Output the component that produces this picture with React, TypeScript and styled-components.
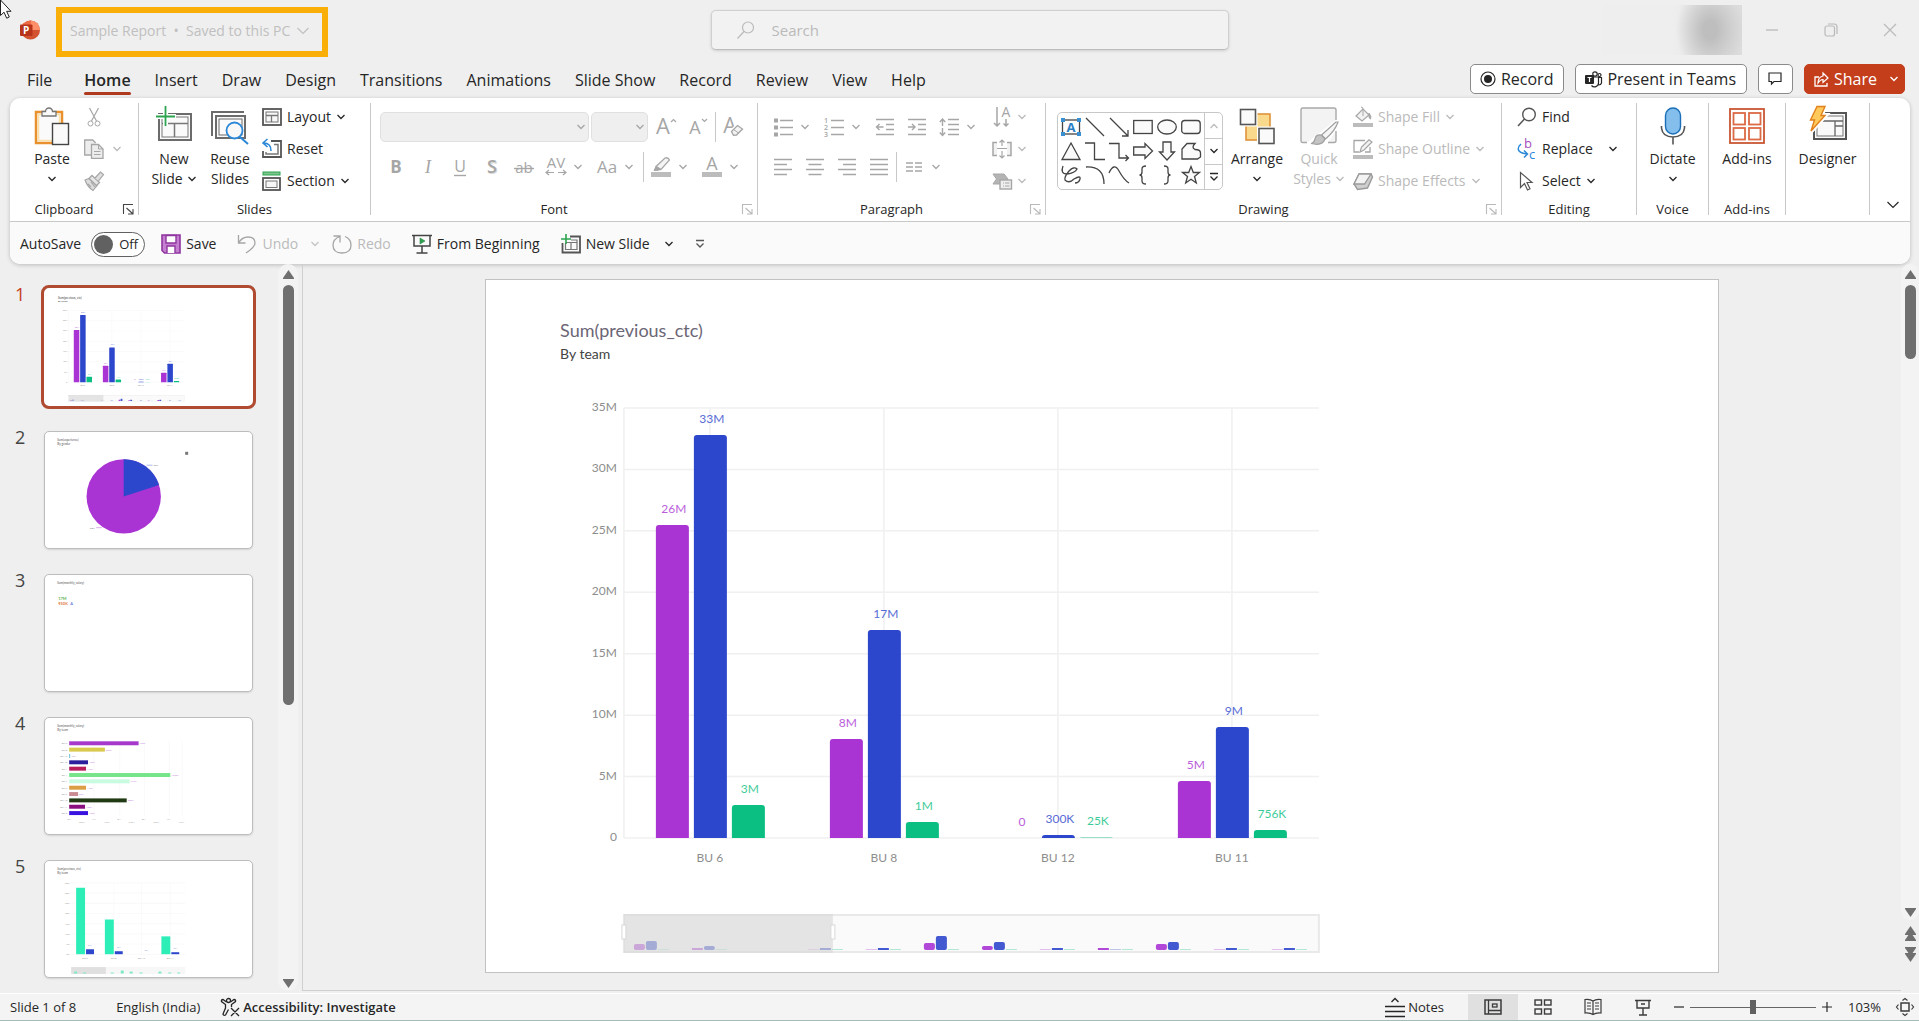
import React from "react";
import styled, { createGlobalStyle, css } from "styled-components";

const INK = "#262626";
const MUTED = "#bababa";
const SOFT = "#a6a6a6";
const EDGE = "#c8c8c8";
const ACCENT = "#c43e1c";
const PURPLE = "#aa34d3";
const BLUE = "#2d47cc";
const GREEN = "#0bbf82";

const Global = createGlobalStyle`
  * { box-sizing: border-box; }
  html, body, #root { height: 100%; }
  body {
    margin: 0;
    background: #efefef;
    color: ${INK};
    font-family: "Open Sans", "Noto Sans", sans-serif;
    font-size: 14px;
    line-height: 20px;
    overflow: hidden;
  }
  button, input, select { font: inherit; color: inherit; margin: 0; }
  button { background: none; border: 0; padding: 0; }
  h1, h2, p, ol { margin: 0; padding: 0; font-weight: 400; }
`;

const Svg = styled.svg`
  display: block;
  flex: none;
  fill: none;
  stroke: currentColor;
  overflow: visible;
`;

/* ---------- icons ---------- */

type IconProps = { s?: number; h?: number; box?: string; children: React.ReactNode };
const Icon = ({ s = 20, h = s, box = `0 0 ${s} ${h}`, children }: IconProps) => (
  <Svg width={s} height={h} viewBox={box} aria-hidden="true">{children}</Svg>
);

const Chevron = ({ up = false }: { up?: boolean }) => (
  <Icon s={10} h={8}><path d={up ? "M1.5 6 5 2.5 8.5 6" : "M1.5 2 5 5.5 8.5 2"} strokeWidth="1.3" /></Icon>
);

const WideChevron = () => (
  <Icon s={14} h={10}><path d="M1.5 2 7 7.5 12.5 2" strokeWidth="1.2" /></Icon>
);

const PowerPointLogo = () => (
  <Icon s={20} h={20}>
    <g stroke="none">
      <circle cx="10.5" cy="10" r="9.5" fill="#d35230" />
      <path d="M10.5 .5A9.5 9.5 0 0 1 20 10H10.5z" fill="#ff8f6b" />
      <path d="M10.5 .5A9.5 9.5 0 0 0 1 10h9.5z" fill="#ed6c47" />
      <rect x="0" y="4.5" width="12.5" height="11.5" rx="1" fill="#b7341a" />
      <text x="3" y="14" fontSize="10" fontWeight="700" fill="#fff" fontFamily="Open Sans, sans-serif">P</text>
    </g>
  </Icon>
);

const PasteIcon = () => (
  <Icon s={36} h={40}>
    <rect x="2" y="7" width="26" height="31" fill="#fafafa" stroke="#e8912d" strokeWidth="2.5" />
    <rect x="4.5" y="9.5" width="21" height="26" stroke="#fbe0a8" strokeWidth="1.5" />
    <path d="M8 11V6.5h3.5a3.5 3.5 0 0 1 7 0H22V11z" fill="#fafafa" stroke="#767676" strokeWidth="1.3" />
    <rect x="18.5" y="18.5" width="16" height="21" fill="#fafafa" stroke="#444" strokeWidth="1.4" />
  </Icon>
);
const CutIcon = () => (
  <Icon><path d="M5.5 1 12.5 14M14.5 1 7.5 14" strokeWidth="1.2" /><circle cx="6.5" cy="16.5" r="2.5" /><circle cx="13.5" cy="16.5" r="2.5" /></Icon>
);
const CopyIcon = () => (
  <Icon><path d="M7 16H.7V1h8l3 3" fill="#ededed" strokeWidth="1.3" /><path d="M7.5 5.5h7L19 10v9.3H7.5z" fill="#ededed" strokeWidth="1.3" /><path d="M14.5 5.5V10H19M10 12.5h6.5M10 15.5h6.5" /></Icon>
);
const BrushIcon = () => (
  <Icon><path d="m1 9 4-1.5 8 7L9 19.5Q3.500 16 1 9z" fill="#dcdcdc" strokeWidth="1.2" /><path d="m5 7.500 3-3 7.5 7-3 3z" fill="#e6e6e6" strokeWidth="1.3" /><path d="M11 7 16.5 1l3 2.500-5 6.500M4 13l3 3M7 11l4 5" fill="#dedede" strokeWidth="1.2" /></Icon>
);
const NewSlideIcon = () => (
  <Icon s={40} h={40}>
    <g stroke="#777"><rect x="5" y="9" width="32" height="26" fill="#fafafa" stroke="#6b6b6b" strokeWidth="2" /><rect x="8" y="12" width="26" height="20" strokeWidth="1" /><path d="M8 18.5h26M20.5 18.5V32" strokeWidth="1.5" /></g>
    <path d="M1 11.5h21M11.5 0v21" stroke="#fff" strokeWidth="5" /><path d="M2 11.5h19M11.5 1v20" stroke="#2da44e" strokeWidth="1.8" />
  </Icon>
);
const ReuseIcon = () => (
  <Icon s={40} h={40}>
    <g stroke="#6b6b6b"><path d="M2 31V7h32" strokeWidth="2" /><rect x="6" y="11" width="29" height="22" fill="#fafafa" strokeWidth="2" /><rect x="9" y="14" width="23" height="16" /></g>
    <circle cx="24.5" cy="25.5" r="8" fill="#f8f8f8" stroke="#2b88d8" strokeWidth="1.8" /><path d="m30 32 8 7" stroke="#2b88d8" strokeWidth="2" />
  </Icon>
);
const LayoutIcon = () => (
  <Icon><g stroke="#555"><rect x="1" y="2" width="18" height="16" strokeWidth="1.8" /><rect x="4" y="5" width="12" height="10" stroke="#777" fill="#f7f7f7" /><path d="M4 8.5h12M9.5 8.5V15" stroke="#777" strokeWidth="1.3" /></g></Icon>
);
const ResetIcon = () => (
  <Icon><g stroke="#555"><path d="M9 2h10v16H1v-6" strokeWidth="1.8" /><path d="M12 5.5h4V15H4v-2" stroke="#777" strokeWidth="1.5" /></g><path d="M5.5 0 1 4l4.5 4M1.5 4C6 4 9 6 9 12" stroke="#2b88d8" strokeWidth="1.6" /></Icon>
);
const SectionIcon = () => (
  <Icon><rect x="1" y="1" width="17" height="3" fill="#7cc68d" stroke="#2da44e" /><rect x="1" y="7" width="17" height="12" stroke="#555" strokeWidth="1.8" /><rect x="4" y="10" width="11" height="6.5" stroke="#777" fill="#f7f7f7" /></Icon>
);

const letter = (t: string, size = 20, extra: React.SVGProps<SVGTextElement> = {}) => (
  <text x="10" y="17" textAnchor="middle" fontSize={size} stroke="none" fill="currentColor" {...extra}>{t}</text>
);
const GrowIcon = () => <Icon s={22}>{letter("A", 22, { x: 8, y: 18 })}<path d="m16 6 2.5-2.5L21 6" strokeWidth="1.2" /></Icon>;
const ShrinkIcon = () => <Icon s={22}>{letter("A", 18, { x: 8, y: 18 })}<path d="m15 3 2.5 2.5L20 3" strokeWidth="1.2" /></Icon>;
const ClearIcon = () => (
  <Icon s={22}>{letter("A", 21, { x: 8, y: 17 })}<path d="m9.500 15.500 6-6 5 3.500-6 6-3 .2z" fill="#fff" stroke="#fff" strokeWidth="4" /><path d="m9.500 15.500 6-6 5 3.500-6 6-3 .2z" fill="#f4f4f4" strokeWidth="1.3" /><path d="m11.500 13.500 5 3.500" /></Icon>
);
const BoldIcon = () => <Icon>{letter("B", 17, { fontWeight: 700, y: 16 })}</Icon>;
const ItalicIcon = () => <Icon>{letter("I", 18, { fontFamily: "Liberation Serif, serif", fontStyle: "italic", y: 16 })}</Icon>;
const UnderlineIcon = () => <Icon>{letter("U", 16, { y: 15 })}<path d="M4 18.5h12" strokeWidth="1.4" /></Icon>;
const ShadowIcon = () => <Icon>{letter("S", 18, { x: 11, y: 17, fontWeight: 700, opacity: 0.4 })}{letter("S", 18, { y: 16, fontWeight: 600 })}</Icon>;
const StrikeIcon = () => <Icon>{letter("ab", 15, { y: 16 })}<path d="M0 11.5h20" strokeWidth="1.4" /></Icon>;
const SpacingIcon = () => <Icon s={22}>{letter("AV", 15, { x: 11, y: 12 })}<path d="M1 16.5h8M13 16.5h8M4 14l-3 2.5L4 19M18 14l3 2.5-3 2.5" strokeWidth="1.2" /></Icon>;
const CaseIcon = () => <Icon s={22}>{letter("Aa", 17, { x: 11, y: 17 })}</Icon>;
const HighlightIcon = () => (
  <Icon><path d="M0 17.5h20" stroke="#bcbcbc" strokeWidth="5" /><path d="M5 9.5 14 1q3-1 4.5 2L10 12.5z" fill="#f4f4f4" strokeWidth="1.3" /><path d="m5 9.5-2 4 4-.2 3-.8z" fill="currentColor" /></Icon>
);
const FontColorIcon = () => <Icon>{letter("A", 18, { y: 13 })}<path d="M0 17.5h20" stroke="#bcbcbc" strokeWidth="5" /></Icon>;

const BulletsIcon = () => <Icon><path d="M7 3.5h13M7 10.5h13M7 17.5h13" strokeWidth="1.4" /><path d="M1 3.5h4M1 10.5h4M1 17.5h4" strokeWidth="4" /></Icon>;
const NumbersIcon = () => (
  <Icon><path d="M7 3.5h13M7 10.5h13M7 17.5h13" strokeWidth="1.4" />{["1", "2", "3"].map((n, i) => <text key={n} x="0" y={6 + i * 7} fontSize="7" fontWeight="600" stroke="none" fill="currentColor">{n}</text>)}</Icon>
);
const OutdentIcon = () => <Icon><path d="M1 2.5h18M11 7.5h8M11 12.5h8M1 17.5h18M1.5 10h7M4.5 7l-3 3 3 3" strokeWidth="1.4" /></Icon>;
const IndentIcon = () => <Icon><path d="M1 2.5h18M11 7.5h8M11 12.5h8M1 17.5h18M1 10h7M5 7l3 3-3 3" strokeWidth="1.4" /></Icon>;
const LineSpacingIcon = () => <Icon><path d="M9 2.5h11M9 7.5h11M9 12.5h11M9 17.5h11M3.5 2.5V9M3.5 11v7M.8 5l2.7-3 2.7 3M.8 15.5l2.7 3 2.7-3" strokeWidth="1.4" /></Icon>;
const AlignLeftIcon = () => <Icon><path d="M1 2.5h18M1 7.5h13M1 12.5h18M1 17.5h13" strokeWidth="1.5" /></Icon>;
const AlignCenterIcon = () => <Icon><path d="M1 2.5h18M3.5 7.5h13M1 12.5h18M3.5 17.5h13" strokeWidth="1.5" /></Icon>;
const AlignRightIcon = () => <Icon><path d="M1 2.5h18M6 7.5h13M1 12.5h18M6 17.5h13" strokeWidth="1.5" /></Icon>;
const JustifyIcon = () => <Icon><path d="M1 2.5h18M1 7.5h18M1 12.5h18M1 17.5h18" strokeWidth="1.5" /></Icon>;
const ColumnsIcon = () => <Icon><path d="M2 6h7M2 10h7M2 14h7M11 6h7M11 10h7M11 14h7" strokeWidth="1.3" /></Icon>;
const TextDirIcon = () => <Icon>{letter("A", 14, { x: 14, y: 10 })}<path d="M5 0v19M2 16l3 3 3-3M14 12v7M11.5 16.5 14 19l2.5-2.5" strokeWidth="1.5" /></Icon>;
const AlignTextIcon = () => <Icon><path d="M5 3.5H1v13h4M15 3.5h4v13h-4" fill="#f2f2f2" strokeWidth="1.5" /><path d="M5 9.5h10M10 1v6M10 12v7M7.5 3.5 10 1l2.5 2.5M7.5 16.5 10 19l2.5-2.5" strokeWidth="1.2" /></Icon>;
const SmartArtIcon = () => <Icon><path d="M1 3h11l4 5-3 5H1l3.5-5z" fill="#b4b4b4" /><rect x="8" y="9" width="11.5" height="9" fill="#efefef" strokeWidth="1.4" /><path d="M11 12h1M13 12h4.5M11 15h1M13 15h4.5" /></Icon>;

const ArrangeIcon = () => (
  <Icon s={36} h={40}>
    <rect x="7" y="9" width="24" height="26" fill="#f9d98c" stroke="#e0933a" strokeWidth="1.6" />
    <g fill="#fff" stroke="#fff" strokeWidth="4"><rect x="1.5" y="4.5" width="15" height="15" /><rect x="20" y="23.5" width="15" height="15" /></g>
    <rect x="1.5" y="4.5" width="15" height="15" fill="#fafafa" stroke="#555" strokeWidth="1.6" />
    <rect x="20" y="23.5" width="15" height="15" fill="#fafafa" stroke="#555" strokeWidth="1.6" />
  </Icon>
);
const QuickStylesIcon = () => (
  <Icon s={40} h={40}>
    <path d="M8 37.5H4q-2 0-2-2V5q0-2 2-2h31q2 0 2 2v10M37 26v9.5q0 2-2 2h-6" fill="#f3f3f3" stroke="#a9a9a9" strokeWidth="1.4" />
    <path d="M37 17 22.5 30l4 4Q36 26 39 17z" fill="#f6f6f6" stroke="#a0a0a0" strokeWidth="1.2" />
    <path d="M22 30q-5-1-6 4-1 4-4 4.5 12 3 14-5z" fill="#c4c4c4" stroke="#a0a0a0" strokeWidth="1.2" />
  </Icon>
);
const FillIcon = () => <Icon><path d="M0 18h20" stroke="#bcbcbc" strokeWidth="4" /><path d="m3 9 7-7 6 6-7 6z" fill="#f2f2f2" strokeWidth="1.2" /><path d="M10 9V2q0-2-2-2" /><path d="M16 6q3 4 1.5 6-2-.5-1.5-6z" fill="currentColor" /></Icon>;
const OutlineIcon = () => <Icon><path d="M0 18h20" stroke="#bcbcbc" strokeWidth="4" /><path d="M12 1.5H1V13h5M17 8v5h-5" strokeWidth="1.3" /><path d="m7 13 1.5-5L16 .8 19 3l-8 8z" fill="#f2f2f2" strokeWidth="1.2" /></Icon>;
const EffectsIcon = () => <Icon><path d="M1 13 6 3h12l1.5 3-5 11-10 1.5z" fill="#cfcfcf" stroke="#9a9a9a" strokeWidth="1.4" /><path d="M6 3 1 13h10.5L18 3z" fill="#f3f3f3" stroke="#9a9a9a" strokeWidth="1.3" /></Icon>;

const FindIcon = () => <Icon><circle cx="12" cy="7.5" r="6.3" strokeWidth="1.4" /><path d="M7.5 12 1 19" strokeWidth="1.5" /></Icon>;
const ReplaceIcon = () => (
  <Icon s={20} h={22}>
    <text x="7" y="10" fontSize="13" stroke="none" fill="#a64ebd">b</text><text x="12" y="21" fontSize="13" stroke="none" fill="#2b88d8">c</text>
    <path d="M4 6Q.5 9 1.5 12t8.5 4M7 12.5l3.5 3.5L7 19.5" stroke="#2b88d8" strokeWidth="1.5" />
  </Icon>
);
const SelectIcon = () => <Icon><path d="M3.5 1.5v15l4-4 3 6.5 2.5-1.2-3-6.3H15z" strokeWidth="1.2" fill="#fff" /></Icon>;
const DictateIcon = () => (
  <Icon s={36} h={40}><rect x="10.5" y="3" width="15" height="26" rx="7.5" fill="#83beec" stroke="#1a6fb8" strokeWidth="1.4" /><path d="M6.5 21v2q1 9 11.5 9t11.5-9v-2M18 32v7.5" stroke="#555" strokeWidth="1.6" /></Icon>
);
const AddinsIcon = () => (
  <Icon s={36} h={40}><g stroke="#dc6a45" strokeWidth="1.8"><rect x="1" y="4" width="34" height="34" stroke="#c95733" /><rect x="4.5" y="8" width="11.5" height="11.5" /><rect x="20" y="8" width="11.5" height="11.5" /><rect x="4.5" y="23" width="11.5" height="11.5" /><rect x="20" y="23" width="11.5" height="11.5" /></g></Icon>
);
const DesignerIcon = () => (
  <Icon s={40} h={40}>
    <rect x="6" y="8" width="32" height="26" fill="#fafafa" stroke="#555" strokeWidth="2" /><rect x="9" y="11" width="26" height="20" stroke="#777" /><path d="M9 16h26M27 16v15M27 21h8" stroke="#666" strokeWidth="1.3" />
    <path d="M9 1.5h8l-4 9h4L3 26l3.5-11H2.5z" fill="#fff" stroke="#fff" strokeWidth="5" /><path d="M9 1.5h8l-4 9h4L3 26l3.5-11H2.5z" fill="#ffc95c" stroke="#e0811c" strokeWidth="1.4" />
  </Icon>
);

const SaveIcon = () => (
  <Icon><path d="M1 1h18v18H3.5L1 16.5z" fill="#c57fd0" stroke="#9036a0" strokeWidth="1.6" /><path d="M5 1.5h10V9H5zM6 19v-7h8v7" fill="#fff" stroke="#9036a0" strokeWidth="1.4" /></Icon>
);
const UndoIcon = () => <Icon><path d="M1.5 1v8h7M1.5 9Q5 3 11 3q7 0 7 6 0 4-9 10" strokeWidth="1.3" /></Icon>;
const RedoIcon = () => <Icon><path d="M1.5 2H8v6.5M8 2.5Q1 5 1 11q0 8 9 8t9-8q0-6-6-8.500" strokeWidth="1.3" /></Icon>;
const PresentIcon = () => <Icon><path d="M0 1.5h20M2 1.5V12h16V1.5M10 12v7M4.5 19h11" stroke="#444" strokeWidth="1.5" /><path d="m8 4 5 3-5 3z" fill="#2da44e" stroke="#2b8047" strokeWidth=".6" /></Icon>;
const NewSlideSmallIcon = () => <Icon><g stroke="#555"><path d="M9 2.5h10v16H1.5V9" strokeWidth="1.8" /><path d="M10 6h6v9.5H4.5V9M5 8.5h11M10 8.5v7" stroke="#777" strokeWidth="1.2" /></g><path d="M0 5h10M5 0v10" stroke="#2da44e" strokeWidth="1.6" /></Icon>;
const OverflowIcon = () => <Icon s={10} h={10}><path d="M1 1.5h8M1.5 4.5 5 8l3.5-3.5" strokeWidth="1.3" /></Icon>;
const LauncherIcon = () => <Icon s={11}><path d="M.5 10V.5H10M3.5 4l6 5.5M10 5v5H5" strokeWidth="1.1" /></Icon>;

const RecordIcon = () => <Icon s={16}><circle cx="8" cy="8" r="7" strokeWidth="1.2" /><circle cx="8" cy="8" r="4" fill="currentColor" stroke="none" /></Icon>;
const TeamsIcon = () => (
  <Icon s={17} h={17}><g strokeWidth="1.2"><circle cx="10" cy="3" r="2.2" /><circle cx="14.5" cy="4" r="1.5" /><path d="M9 6h4.5v6a4 4 0 0 1-7 2.5M13.5 6.5h3V12q-.5 2-3 2" /></g><rect x="0" y="4" width="9" height="9" rx="1" fill={INK} stroke="none" /><path d="M2.5 6.5h4M4.5 6.5V11" stroke="#fff" strokeWidth="1.2" /></Icon>
);
const CommentIcon = () => <Icon s={14}><path d="M1 1h12v8.5H6L3.5 12V9.5H1z" strokeWidth="1.2" /></Icon>;
const ShareIcon = () => <Icon s={15}><path d="M5 5H1v9h12v-3" strokeWidth="1.3" /><path d="M9 1v3Q4 5 4 11q2-3.5 5-3.5v3L14 6z" strokeWidth="1.2" /></Icon>;

const AccessibilityIcon = () => (
  <Icon><g strokeWidth="1.3"><circle cx="8.5" cy="3.5" r="2" /><path d="M6.5 5 3 2.500q-2 0-1.500 2L5.500 7.500V11L3 17q.5 2 2.500 1L8.500 12.500M10.500 5 14 2.500q2 0 1.500 2l-4 3V10M11 11l8 8M19 11l-8 8" /></g></Icon>
);
const NotesIcon = () => <Icon><path d="M0 9.5h20M0 14.5h20M0 19.5h20" strokeWidth="1.4" /><path d="m6.5 5 3.5-3.5L13.5 5" strokeWidth="1.4" /></Icon>;
const NormalViewIcon = () => <Icon s={18} h={16}><rect x="1" y="1" width="16" height="14" strokeWidth="1.5" /><path d="M4.5 1v14M4.5 11.5H17" strokeWidth="1.3" /><rect x="8.5" y="5" width="4.5" height="3" strokeWidth="1.3" /></Icon>;
const SorterIcon = () => <Icon s={18} h={16}><g strokeWidth="1.4"><rect x="1" y="1" width="6.5" height="5" /><rect x="10.5" y="1" width="6.5" height="5" /><rect x="1" y="10" width="6.5" height="5" /><rect x="10.5" y="10" width="6.5" height="5" /></g></Icon>;
const ReadingIcon = () => <Icon s={18} h={18}><path d="M9 3Q6 .8 1 1.5V15q5-.5 8 1.5 3-2 8-1.5V1.5Q12 .8 9 3zv13.5M3 5h4M3 8h4M3 11h4M11 5h4M11 8h4M11 11h4" strokeWidth="1.2" /></Icon>;
const ShowIcon = () => <Icon s={16} h={17}><path d="M0 1.5h16M2 1.5V9h12V1.5M8 9v7M4 16h8M6 5h4" strokeWidth="1.4" /></Icon>;
const FitIcon = () => <Icon s={18} h={18}><rect x="5" y="5" width="8" height="8" strokeWidth="1.5" /><path d="m6.5 2.5 2.5-2 2.5 2M6.5 15.5l2.5 2 2.5-2M2.5 6.5.5 9l2 2.5M15.5 6.5l2 2.5-2 2.5" strokeWidth="1.2" /></Icon>;

/* ---------- title bar ---------- */

const Shell = styled.div`
  height: 100vh;
  display: flex;
  flex-direction: column;
`;

const Pointer = styled.div`
  position: absolute;
  top: 0;
  left: 0;
`;

const TitleBar = styled.header`
  height: 60px;
  flex: none;
  display: grid;
  grid-template-columns: 1fr minmax(240px, 518px) 1fr;
  align-items: center;
  padding-left: 20px;
  color: ${MUTED};
`;

const TitleLeft = styled.div`
  display: flex;
  align-items: center;
  gap: 16px;
`;

const FileName = styled.button`
  display: flex;
  align-items: center;
  gap: 6px;
  height: 50px;
  margin-top: 4px;
  padding: 0 12px 2px 8px;
  border: 6px solid #f9ae08;
  color: #c0c0c0;
  white-space: pre;
`;

const SearchBox = styled.label`
  height: 40px;
  display: flex;
  align-items: center;
  gap: 16px;
  padding: 0 24px;
  border: 1px solid #d0d0d0;
  border-bottom-color: #bdbdbd;
  border-radius: 5px;
  background: #f2f2f2;
  box-shadow: 0 1px 3px rgba(0, 0, 0, 0.14);

  input {
    flex: 1;
    border: 0;
    background: none;
    outline: 0;
    padding: 0;
    font-size: 15px;
  }
  input::placeholder { color: ${MUTED}; opacity: 1; }
`;

const WindowControls = styled.div`
  display: flex;
  justify-content: flex-end;
  align-items: center;
`;

const Account = styled.div`
  width: 140px;
  height: 50px;
  background:
    radial-gradient(ellipse 34px 46px at 108px 25px, #bebebe 20%, transparent 100%),
    linear-gradient(90deg, #eeeeee 50%, #dcdcdc);
`;

const WindowButton = styled.button`
  width: 59px;
  height: 40px;
  display: grid;
  place-items: center;
`;

/* ---------- tab row ---------- */

const TabRow = styled.div`
  height: 38px;
  flex: none;
  display: flex;
  justify-content: space-between;
  padding: 4px 14px 0 15px;
`;

const Tabs = styled.nav`
  display: flex;
`;

const Tab = styled.button<{ $on?: boolean; $file?: boolean }>`
  display: flex;
  flex-direction: column;
  justify-content: flex-start;
  padding: 5px 12px 0;
  margin-right: ${(p) => (p.$file ? 8 : 0)}px;
  font-size: 16px;
  line-height: 23px;
  font-weight: ${(p) => (p.$on ? 600 : 400)};

  ${(p) => p.$on && css`
    &::after {
      content: "";
      align-self: stretch;
      height: 3px;
      border-radius: 2px;
      background: #b03a1e;
    }
  `}
`;

const Actions = styled.div`
  display: flex;
  gap: 11px;
  height: 30px;
`;

const Action = styled.button<{ $primary?: boolean }>`
  display: flex;
  align-items: center;
  gap: 5px;
  padding: 0 ${(p) => (p.$primary ? 5 : 10)}px 0 9px;
  border: 1px solid ${(p) => (p.$primary ? ACCENT : "#8a8a8a")};
  border-radius: 5px;
  background: ${(p) => (p.$primary ? ACCENT : "#fff")};
  color: ${(p) => (p.$primary ? "#fff" : INK)};
  font-size: 16px;

  span { margin-right: ${(p) => (p.$primary ? 7 : 0)}px; }
`;

/* ---------- ribbon ---------- */

const RibbonCard = styled.section`
  flex: none;
  margin: 0 9px 0 10px;
  border-radius: 10px;
  background: #fff;
  box-shadow: 0 1px 4px rgba(0, 0, 0, 0.22);
`;

const RibbonRow = styled.div`
  display: flex;
  height: 123px;
  padding: 5px 0 6px;
`;

const GroupBox = styled.div<{ $w: number }>`
  flex: none;
  width: ${(p) => p.$w}px;
  display: flex;
  flex-direction: column;
  border-right: 1px solid ${EDGE};
`;

const GroupBody = styled.div<{ $pad: number; $gap: number; $center?: boolean }>`
  height: 100px;
  display: flex;
  align-items: flex-start;
  justify-content: ${(p) => (p.$center ? "center" : "flex-start")};
  gap: ${(p) => p.$gap}px;
  padding-left: ${(p) => p.$pad}px;
`;

const GroupFoot = styled.div`
  display: flex;
  height: 12px;
  font-size: 13px;
  line-height: 12px;

  p { flex: 1; text-align: center; }
`;

const Launcher = styled.button<{ $off?: boolean }>`
  width: 20px;
  display: grid;
  place-items: center;
  color: ${(p) => (p.$off ? MUTED : "#444")};
`;

type GroupProps = { w: number; pad?: number; gap?: number; label?: string; launcher?: "on" | "off"; children: React.ReactNode };
const Group = ({ w, pad = 0, gap = 8, label, launcher, children }: GroupProps) => (
  <GroupBox $w={w}>
    <GroupBody $pad={pad} $gap={gap} $center={!pad}>{children}</GroupBody>
    <GroupFoot>
      <p>{label}</p>
      {launcher && <Launcher $off={launcher === "off"} aria-label={`${label} settings`}><LauncherIcon /></Launcher>}
    </GroupFoot>
  </GroupBox>
);

const Big = styled.button<{ $w: number; $off?: boolean }>`
  width: ${(p) => p.$w}px;
  display: flex;
  flex-direction: column;
  align-items: center;
  padding-top: 2px;
  color: ${(p) => (p.$off ? MUTED : INK)};

  > svg:first-child { margin-bottom: 4px; }
  > svg:last-child { margin-top: 6px; }
`;

const Line = styled.span`
  display: flex;
  align-items: center;
  gap: 4px;
  white-space: nowrap;
`;

const Column = styled.div`
  display: flex;
  flex-direction: column;
  gap: 4px;
`;

const Small = styled.button<{ $off?: boolean; $split?: number }>`
  height: 28px;
  display: flex;
  align-items: center;
  gap: 5px;
  white-space: nowrap;
  color: ${(p) => (p.$off ? MUTED : INK)};

  > svg:first-child { color: ${(p) => (p.$off ? SOFT : "#555")}; }
  > svg:last-child:not(:first-child) { margin-left: ${(p) => p.$split ?? 0}px; }
`;

const ToolRows = styled.div`
  display: flex;
  flex-direction: column;
  gap: 10px;
  padding-top: 9px;
`;

const ToolRow = styled.div`
  height: 30px;
  display: flex;
  align-items: center;
  color: ${SOFT};
`;

const Tool = styled.button`
  width: 32px;
  height: 30px;
  display: grid;
  place-items: center;
`;

const Drop = styled.button`
  width: 12px;
  height: 30px;
  margin-right: 7px;
  display: grid;
  place-items: center;
`;

const Rule = styled.i`
  width: 1px;
  height: 30px;
  margin: 0 1px;
  background: ${EDGE};
`;

const Field = styled.label<{ $w: number }>`
  width: ${(p) => p.$w}px;
  height: 30px;
  margin-right: 2px;
  display: grid;
  align-items: center;
  border: 1px solid #e0e0e0;
  border-radius: 5px;
  background: #efefef;

  select {
    grid-area: 1 / 1;
    height: 100%;
    appearance: none;
    border: 0;
    background: none;
  }
  svg { grid-area: 1 / 1; justify-self: end; margin-right: 2px; }
`;

const Split = ({ name, icon }: { name: string; icon: React.ReactNode }) => (
  <>
    <Tool aria-label={name}>{icon}</Tool>
    <Drop aria-label={`${name} options`}><Chevron /></Drop>
  </>
);

const Gallery = styled.div`
  display: flex;
  margin-top: 9px;
  border: 1px solid ${EDGE};
  border-radius: 5px;
  background: #fff;
`;

const ShapeGrid = styled.div`
  display: grid;
  grid-template-columns: repeat(6, 24px);
  grid-auto-rows: 24px;
  padding: 2px 1px;
  color: #444;
`;

const ShapeButton = styled.button`
  display: grid;
  place-items: center;
`;

const GalleryScroll = styled.div`
  width: 18px;
  display: grid;
  grid-template-rows: repeat(3, 1fr);
  border-left: 1px solid ${EDGE};

  button { display: grid; place-items: center; }
  button + button { border-top: 1px solid ${EDGE}; }
  button:first-child { color: ${MUTED}; }
`;

const f = "#fafafa";
const shapes: [string, React.ReactNode][] = [
  ["Text box", <g key="s"><rect x="1.5" y="3" width="17" height="14" stroke="#444" />{letter("A", 13, { y: 15, fontWeight: 700, fill: "#2b7fc4" })}<path d="M0 3h4M16 3h4M0 17h4M16 17h4" stroke="#3a8fd0" strokeWidth="4" /></g>],
  ["Line", <path key="s" d="m1 1 18 18" />],
  ["Arrow", <path key="s" d="m1 1 18 18M19 13v6h-6" />],
  ["Rectangle", <rect key="s" x=".7" y="3.5" width="18.5" height="13" fill={f} />],
  ["Oval", <ellipse key="s" cx="10" cy="10" rx="9.3" ry="7" fill={f} />],
  ["Rounded rectangle", <rect key="s" x=".7" y="3.5" width="18.5" height="13" rx="3" fill={f} />],
  ["Triangle", <path key="s" d="M10 2 19 18.5H1z" fill={f} />],
  ["Elbow connector", <path key="s" d="M0 2h9.500v16.500H20" />],
  ["Elbow arrow", <path key="s" d="M0 2.5h10V17h9M16.5 14l3 3-3 3" />],
  ["Right arrow", <path key="s" d="M.7 6H12V2.5L19.5 10 12 17.5V14H.7z" fill={f} />],
  ["Down arrow", <path key="s" d="M6 1h8v10h3.5L10 19l-7.5-8H6z" fill={f} />],
  ["Freeform", <path key="s" d="M1 18V8l5-5.500h8q-4 4 0 6 5.500 0 5.500 3.500v4l-3 2z" fill={f} />],
  ["Scribble", <path key="s" d="M2 1q-3 8 4 8 8-1 10-5-3-3-8 2-5 6-4 9 4 4 9-1 7-4 6 0-1 4-5 4" />],
  ["Arc", <path key="s" d="M1 2q18-1 18 17" />],
  ["Curve", <path key="s" d="M0 8Q5-3 10 6t10 12" />],
  ["Left brace", <path key="s" d="M13 1q-4 0-4 3v3q0 3-2.5 3Q9 10 9 13v3q0 3 4 3" />],
  ["Right brace", <path key="s" d="M7 1q4 0 4 3v3q0 3 2.5 3Q11 10 11 13v3q0 3-4 3" />],
  ["Star", <path key="s" d="m10 1.5 2.3 6h6.2l-5 4 1.8 6.5-5.300-3.700L4.700 18l1.800-6.5-5-4h6.200z" fill={f} />],
];

const Collapse = styled.button`
  flex: 1;
  display: flex;
  justify-content: center;
  align-items: flex-end;
  padding: 0 0 5px 5px;
`;

/* ---------- quick access ---------- */

const QuickBar = styled.div`
  height: 43px;
  display: flex;
  align-items: center;
  gap: 21px;
  padding: 2px 10px 0;
  border-top: 1px solid ${EDGE};
  border-radius: 0 0 10px 10px;
  background: #fafafa;
`;

const QuickCluster = styled.div<{ $off?: boolean; $gap?: number }>`
  display: flex;
  align-items: center;
  gap: ${(p) => p.$gap ?? 12}px;
  color: ${(p) => (p.$off ? "#c4c4c4" : INK)};
`;

const Switch = styled.label`
  display: flex;
  align-items: center;
  gap: 10px;

  input { appearance: none; width: 19px; height: 19px; margin: 0; border-radius: 50%; background: #616161; }
`;

const SwitchTrack = styled.span`
  width: 54px;
  height: 25px;
  display: flex;
  align-items: center;
  gap: 6px;
  padding-left: 2px;
  border: 1px solid #616161;
  border-radius: 13px;
  background: #fff;
  font-size: 13px;
`;

/* ---------- workspace ---------- */

const Workspace = styled.main`
  flex: 1;
  min-height: 0;
  display: flex;
`;

const SlidePane = styled.aside`
  width: 303px;
  flex: none;
  display: flex;
  padding-right: 4px;
  border-right: 1px solid #cfcfcf;
  overflow: hidden;
`;

const SlideList = styled.ol`
  flex: 1;
  list-style: none;
  display: flex;
  flex-direction: column;
  gap: 25px;
  padding-top: 24px;
`;

const SlideItem = styled.li<{ $on?: boolean }>`
  flex: none;
  display: grid;
  grid-template-columns: 29px 209px;
  padding-left: 15px;
  color: ${(p) => (p.$on ? ACCENT : "#444")};
  font-size: 18px;
  line-height: 12px;
`;

const Thumb = styled.button<{ $on?: boolean }>`
  height: 118px;
  display: block;
  border: 1px solid ${(p) => (p.$on ? "#fff" : "#bdbdbd")};
  border-radius: 5px;
  background: #fff;
  outline: ${(p) => (p.$on ? "3px solid #b04a30" : "none")};
  box-shadow: 0 1px 2px rgba(0, 0, 0, 0.12);
  overflow: hidden;

  svg { width: 100%; height: 100%; stroke: none; }
`;

const ScrollTrack = styled.div<{ $w: number }>`
  width: ${(p) => p.$w}px;
  flex: none;
  display: flex;
  flex-direction: column;
  align-items: center;
  padding: 6px 0 3px;
  border-radius: 10px;
  background: #f3f3f3;
  color: #6f6f6f;
`;

const ScrollBody = styled.div`
  flex: 1;
  width: 11px;
  margin: 6px 0 5px;
`;

const ScrollThumb = styled.div<{ $size: number }>`
  height: ${(p) => p.$size}%;
  border-radius: 6px;
  background: #6f6f6f;
`;

const Arrow = ({ down = false, twice = false }: { down?: boolean; twice?: boolean }) => {
  const h = twice ? 15 : 9;
  return (
    <Icon s={11} h={h}>
      <g fill="currentColor" stroke="none" transform={down ? `rotate(180 5.5 ${h / 2})` : undefined}>
        <path d="M5.5 0 11 8v1H0V8z" />
        {twice && <path d="M5.5 6 11 14v1H0v-1z" />}
      </g>
    </Icon>
  );
};

const ScrollButton = styled.button`
  display: block;
`;

const NavStack = styled.div`
  width: 18px;
  display: flex;
  flex-direction: column;
  align-items: center;
  gap: 6px;
  padding-bottom: 29px;
  color: #6f6f6f;

  ${ScrollTrack} { flex: 1; }
`;

const Stage = styled.div`
  flex: 1;
  min-width: 0;
  display: flex;
  justify-content: center;
  padding: 15px 0 17px;
  border-bottom: 1px solid #d0d0d0;
`;

const Slide = styled.article`
  height: 100%;
  aspect-ratio: 16 / 9;
  display: grid;
  grid-template-rows: 100%;
  border: 1px solid #c2c2c2;
  background: #fff;
  font-family: Lato, sans-serif;

  > * { grid-area: 1 / 1; }
  > svg { width: 100%; height: 100%; stroke: none; }
`;

const SlideText = styled.div`
  padding: 37px 0 0 74px;

  h1 { color: #6b6675; font-size: 18px; line-height: 26px; }
  p { color: #444; font-size: 14px; line-height: 22px; }
`;

/* ---------- charts ---------- */

const AXIS = { left: 137, right: 832, top: 128, bottom: 558 };
const CENTERS = [223, 397, 571, 745];
const TEAMS = ["BU 6", "BU 8", "BU 12", "BU 11"];
const BARS: [number, string, string][][] = [
  [[313, PURPLE, "26M"], [403, BLUE, "33M"], [33, GREEN, "3M"]],
  [[99, PURPLE, "8M"], [208, BLUE, "17M"], [16, GREEN, "1M"]],
  [[0, PURPLE, "0"], [3, BLUE, "300K"], [1, GREEN, "25K"]],
  [[57, PURPLE, "5M"], [111, BLUE, "9M"], [8, GREEN, "756K"]],
];
const OVERVIEW = [[6, 9, 1], [2, 4, 1], [0, 0, 0], [1, 2, 1], [1, 2, 1], [7, 14, 1], [4, 8, 1], [1, 2, 1], [2, 1, 1], [6, 8, 1], [1, 2, 1], [1, 2, 1]];

const Columns = () => (
  <g fontFamily="Lato, sans-serif" fontSize="12" stroke="none">
    <g stroke="#f0f0f2" strokeWidth="1.5">
      {[0, 1, 2, 3, 4, 5, 6, 7].map((i) => {
        const y = AXIS.top + (i * 430) / 7;
        return <line key={i} x1={AXIS.left} x2={AXIS.right} y1={y} y2={y} />;
      })}
      <line x1={AXIS.left} x2={AXIS.left} y1={AXIS.top} y2={AXIS.bottom} />
      {CENTERS.map((x) => <line key={x} x1={x} x2={x} y1={AXIS.top} y2={AXIS.bottom} />)}
    </g>
    {["35M", "30M", "25M", "20M", "15M", "10M", "5M", "0"].map((t, i) => (
      <text key={t} x={130} y={131 + (i * 430) / 7} textAnchor="end" fill="#8d8d8d">{t}</text>
    ))}
    {BARS.map((set, c) => (
      <g key={TEAMS[c]}>
        {set.map(([h, color, label], i) => {
          const x = CENTERS[c] - 54 + i * 38;
          const r = Math.min(h, 3);
          return (
            <g key={color} fill={color}>
              {h > 0 && <path d={`M${x} ${AXIS.bottom}v${r - h}q0 ${-r} 3 ${-r}h27q3 0 3 ${r}v${h - r}z`} opacity={h === 1 ? 0.4 : 1} />}
              <text x={x + 18} y={AXIS.bottom - h - 12} textAnchor="middle" opacity=".8">{label}</text>
            </g>
          );
        })}
        <text x={CENTERS[c]} y={AXIS.bottom + 24} textAnchor="middle" fill="#8d8d8d">{TEAMS[c]}</text>
      </g>
    ))}
    <rect x="137" y="635" width="695" height="37" fill="#fafafa" stroke="#e9e9e9" strokeWidth="2" />
    {OVERVIEW.map((set, c) => set.map((h, i) => h > 0 && (
      <rect key={`${c}-${i}`} x={147 + c * 58 + i * 12} y={670 - h} width="11" height={h} rx={h > 3 ? 2 : 0} fill={[PURPLE, BLUE, GREEN][i]} opacity={h === 1 ? 0.3 : 0.9} />
    )))}
    <rect x="137" y="634" width="209" height="39" fill="#d8d8d8" opacity=".65" />
    {[137, 346].map((x) => <rect key={x} x={x - 2} y="645" width="4" height="14" fill="#fff" stroke="#d8d8d8" />)}
  </g>
);

const Caption = ({ title, sub }: { title: string; sub?: string }) => (
  <g fontFamily="Lato, sans-serif" fontSize="3" fill="#555"><text x="12" y="9.5">{title}</text>{sub && <text x="12" y="13.5">{sub}</text>}</g>
);

const FirstThumb = () => (
  <svg viewBox="0 0 1232 694">
    <g fontFamily="Lato, sans-serif" fill="#444"><text x="74" y="57" fontSize="18">Sum(previous_ctc)</text><text x="74" y="80" fontSize="16">By team</text></g>
    <Columns />
  </svg>
);

const PieThumb = () => (
  <svg viewBox="0 0 208 117">
    <Caption title="Sum(experience)" sub="By gender" />
    <circle cx="79" cy="65" r="37.5" fill={PURPLE} />
    <path d="M79 65V27.5A37.5 37.5 0 0 1 114.7 53.4z" fill={BLUE} />
    <rect x="141" y="20" width="3" height="3" fill="#777" />
    <path d="M102 33.5h6" stroke={BLUE} strokeWidth=".4" /><path d="M51 96.5h6" stroke={PURPLE} strokeWidth=".4" />
    <text x="109" y="34.5" fontSize="2.5" fill="#777">20%</text><text x="45" y="97.5" fontSize="2.5" fill="#777">80%</text>
  </svg>
);

const KpiThumb = () => (
  <svg viewBox="0 0 208 117" fontFamily="Lato, sans-serif" fontSize="4" fontWeight="700">
    <g fontWeight="400"><Caption title="Sum(monthly_salary)" /></g>
    <text x="13" y="25" fill="#58b04a">17M</text>
    <text x="13" y="30.5" fill="#e0763a">₹50K</text>
    <text x="25" y="30.5" fill="#6a7bd8">A</text>
  </svg>
);

const TEAM_BARS: [string, number, string][] = [
  ["BU 6", 70, "#a638cc"], ["BU 8", 36, "#d9c94d"], ["BU 12", 1, "#5cc0cc"], ["BU 10", 19, "#2b1f9e"],
  ["BU 1", 17, "#b81d5c"], ["BU 4", 102, "#76e58a"], ["BU 7", 61, "#c8fbe0"], ["BU 2", 17, "#dc9e45"],
  ["BU 5", 9, "#c98d93"], ["BU 13", 58, "#203a13"], ["BU 11", 16, "#8a1080"], ["BU 3", 19, "#3a12e0"],
];

const RowsThumb = () => (
  <svg viewBox="0 0 208 117" fontFamily="Lato, sans-serif" fontSize="2.5">
    <Caption title="Sum(monthly_salary)" sub="By team" />
    <path d="M49 23v76M75 23v76M100 23v76M125 23v76M138 23v76" stroke="#f4f4f4" strokeWidth=".5" />
    {TEAM_BARS.map(([name, len, color], i) => (
      <g key={name}>
        <text x="22" y={26.5 + i * 6.4} textAnchor="end" fill="#999">{name}</text>
        <rect x="24" y={23.5 + i * 6.4} width={len} height="4" fill={color} />
        <text x={25 + len} y={26.5 + i * 6.4} fill="#c98ae0">{len * 10}K</text>
      </g>
    ))}
    {[0, 1, 2, 3, 4].map((i) => <text key={i} x={24 + i * 25} y="103" textAnchor="middle" fill="#999">{i}M</text>)}
    {[0, 1, 2, 3, 4].map((i) => <text key={i} x={37 + i * 25} y="106" textAnchor="middle" fill="#999">{i}.5M</text>)}
  </svg>
);

const PairsThumb = () => (
  <svg viewBox="0 0 208 117" fontFamily="Lato, sans-serif" fontSize="2.5">
    <Caption title="Sum(previous_ctc)" sub="By team" />
    {[0, 1, 2, 3, 4, 5, 6, 7].map((i) => (
      <g key={i}>
        <path d={`M26 ${22 + i * 10.3}h115`} stroke="#f2f2f2" strokeWidth=".5" />
        <text x="25" y={23 + i * 10.3} textAnchor="end" fill="#999">{35 - i * 5}M</text>
      </g>
    ))}
    {([[31, 67, 5], [60, 35, 3], [88, 0, 0], [117, 18, 2]]).map(([x, a, b], i) => (
      <g key={x}>
        <path d={`M${x + 9} 22v72`} stroke="#f4f4f4" strokeWidth=".5" />
        <rect x={x} y={94 - a} width="9" height={a} fill="#2eeeb8" />
        <rect x={x + 10} y={94 - b} width="8" height={b} fill={BLUE} />
        <text x={x + 14} y={91 - b} textAnchor="middle" fill="#8a97e0">{b}M</text>
        <text x={x + 9} y="98.5" textAnchor="middle" fill="#999">{TEAMS[i]}</text>
      </g>
    ))}
    <rect x="26" y="107" width="115" height="7" fill="#f7f7f7" />
    <rect x="26" y="107" width="35" height="7" fill="#e0e0e0" />
    {[[29, 2], [38, 1], [66, 1], [76, 3], [85, 2], [95, 1], [114, 2], [124, 1], [133, 1]].map(([x, h]) => <rect key={x} x={x} y={113.5 - h} width="3" height={h} fill="#7fe8c8" />)}
  </svg>
);

const THUMBS = [FirstThumb, PieThumb, KpiThumb, RowsThumb, PairsThumb];

/* ---------- status bar ---------- */

const StatusBar = styled.footer`
  height: 28px;
  flex: none;
  display: flex;
  justify-content: space-between;
  margin-top: 2px;
  border-top: 1px solid #fff;
  border-bottom: 1px solid #a3bcb8;
  background: #f4f4f4;
  font-size: 13px;
`;

const StatusSide = styled.div`
  display: flex;
  align-items: center;
`;

const StatusItem = styled.button<{ $start?: number; $end?: number; $strong?: boolean }>`
  display: flex;
  align-items: center;
  gap: 3px;
  padding: 0 ${(p) => p.$end ?? 0}px 0 ${(p) => p.$start ?? 0}px;
  font-weight: ${(p) => (p.$strong ? 600 : 400)};
  white-space: nowrap;
`;

const ViewButton = styled.button<{ $on?: boolean; $w?: number }>`
  width: ${(p) => p.$w ?? 50}px;
  height: 100%;
  display: grid;
  place-items: center;
  color: #3b3b3b;
  background: ${(p) => (p.$on ? "#e0e0e0" : "none")};
`;

const ZoomButton = styled.button`
  width: 22px;
  display: grid;
  place-items: center;
`;

const ZoomRange = styled.input`
  width: 126px;
  height: 16px;
  appearance: none;
  background: linear-gradient(#666, #666) center / 100% 1px no-repeat;

  &::-webkit-slider-thumb {
    appearance: none;
    width: 6px;
    height: 14px;
    background: #616161;
  }
`;

const TABS = ["File", "Home", "Insert", "Draw", "Design", "Transitions", "Animations", "Slide Show", "Record", "Review", "View", "Help"];

export default function App() {
  return (
    <Shell>
      <Global />
      <TitleBar>
        <TitleLeft>
          <PowerPointLogo />
          <FileName>Sample Report  •  Saved to this PC<WideChevron /></FileName>
        </TitleLeft>
        <SearchBox>
          <Icon s={20}><circle cx="12" cy="7.5" r="5.5" strokeWidth="1.2" /><path d="m8 11.5-6.5 7" strokeWidth="1.2" /></Icon>
          <input placeholder="Search" aria-label="Search" />
        </SearchBox>
        <WindowControls>
          <Account />
          <WindowButton aria-label="Minimize"><Icon s={14}><path d="M1 7h12" strokeWidth="1.3" /></Icon></WindowButton>
          <WindowButton aria-label="Restore"><Icon s={14}><rect x="1" y="3" width="9.5" height="10" rx="2" strokeWidth="1.2" /><path d="M4 1h6q3 0 3 3v7" strokeWidth="1.2" /></Icon></WindowButton>
          <WindowButton aria-label="Close"><Icon s={14}><path d="m1 1 12 12M13 1 1 13" strokeWidth="1.2" /></Icon></WindowButton>
        </WindowControls>
      </TitleBar>

      <TabRow>
        <Tabs>{TABS.map((t) => <Tab key={t} $on={t === "Home"} $file={t === "File"}>{t}</Tab>)}</Tabs>
        <Actions>
          <Action><RecordIcon />Record</Action>
          <Action><TeamsIcon />Present in Teams</Action>
          <Action aria-label="Comments"><CommentIcon /></Action>
          <Action $primary><ShareIcon /><span>Share</span><Chevron /></Action>
        </Actions>
      </TabRow>

      <RibbonCard>
        <RibbonRow>
          <Group w={129} pad={18} label="Clipboard" launcher="on">
            <Big $w={48}><PasteIcon /><Line>Paste</Line><Chevron /></Big>
            <Column>
              <Small $off aria-label="Cut"><CutIcon /></Small>
              <Small $off $split={3} aria-label="Copy"><CopyIcon /><Chevron /></Small>
              <Small $off aria-label="Format Painter"><BrushIcon /></Small>
            </Column>
          </Group>

          <Group w={232} pad={11} label="Slides">
            <Big $w={48}><NewSlideIcon /><Line>New</Line><Line>Slide<Chevron /></Line></Big>
            <Big $w={48}><ReuseIcon /><Line>Reuse</Line><Line>Slides</Line></Big>
            <Column>
              <Small><LayoutIcon />Layout<Chevron /></Small>
              <Small><ResetIcon />Reset</Small>
              <Small><SectionIcon />Section<Chevron /></Small>
            </Column>
          </Group>

          <Group w={387} pad={9} label="Font" launcher="off">
            <ToolRows>
              <ToolRow>
                <Field $w={209}><select disabled aria-label="Font name" /><Chevron /></Field>
                <Field $w={57}><select disabled aria-label="Font size" /><Chevron /></Field>
                <Tool aria-label="Increase font size"><GrowIcon /></Tool>
                <Tool aria-label="Decrease font size"><ShrinkIcon /></Tool>
                <Rule />
                <Tool aria-label="Clear formatting"><ClearIcon /></Tool>
              </ToolRow>
              <ToolRow>
                <Tool aria-label="Bold"><BoldIcon /></Tool>
                <Tool aria-label="Italic"><ItalicIcon /></Tool>
                <Tool aria-label="Underline"><UnderlineIcon /></Tool>
                <Tool aria-label="Text shadow"><ShadowIcon /></Tool>
                <Tool aria-label="Strikethrough"><StrikeIcon /></Tool>
                <Split name="Character spacing" icon={<SpacingIcon />} />
                <Split name="Change case" icon={<CaseIcon />} />
                <Rule />
                <Split name="Highlight" icon={<HighlightIcon />} />
                <Split name="Font color" icon={<FontColorIcon />} />
              </ToolRow>
            </ToolRows>
          </Group>

          <Group w={288} pad={9} label="Paragraph" launcher="off">
            <ToolRows>
              <ToolRow>
                <Split name="Bullets" icon={<BulletsIcon />} />
                <Split name="Numbering" icon={<NumbersIcon />} />
                <Tool aria-label="Decrease indent"><OutdentIcon /></Tool>
                <Tool aria-label="Increase indent"><IndentIcon /></Tool>
                <Split name="Line spacing" icon={<LineSpacingIcon />} />
              </ToolRow>
              <ToolRow>
                <Tool aria-label="Align left"><AlignLeftIcon /></Tool>
                <Tool aria-label="Center"><AlignCenterIcon /></Tool>
                <Tool aria-label="Align right"><AlignRightIcon /></Tool>
                <Tool aria-label="Justify"><JustifyIcon /></Tool>
                <Rule />
                <Split name="Columns" icon={<ColumnsIcon />} />
              </ToolRow>
            </ToolRows>
            <Column>
              <Small $off aria-label="Text direction"><TextDirIcon /><Chevron /></Small>
              <Small $off aria-label="Align text"><AlignTextIcon /><Chevron /></Small>
              <Small $off aria-label="Convert to SmartArt"><SmartArtIcon /><Chevron /></Small>
            </Column>
          </Group>

          <Group w={456} pad={11} gap={6} label="Drawing" launcher="off">
            <Gallery>
              <ShapeGrid>
                {shapes.map(([name, art]) => (
                  <ShapeButton key={name} aria-label={name}><Icon><g strokeWidth="1.3">{art}</g></Icon></ShapeButton>
                ))}
              </ShapeGrid>
              <GalleryScroll>
                <button aria-label="Previous shapes"><Chevron up /></button>
                <button aria-label="Next shapes"><Chevron /></button>
                <button aria-label="All shapes"><OverflowIcon /></button>
              </GalleryScroll>
            </Gallery>
            <Big $w={56}><ArrangeIcon /><Line>Arrange</Line><Chevron /></Big>
            <Big $w={56} $off><QuickStylesIcon /><Line>Quick</Line><Line>Styles<Chevron /></Line></Big>
            <Column>
              <Small $off><FillIcon />Shape Fill<Chevron /></Small>
              <Small $off><OutlineIcon />Shape Outline<Chevron /></Small>
              <Small $off><EffectsIcon />Shape Effects<Chevron /></Small>
            </Column>
          </Group>

          <Group w={135} pad={15} label="Editing">
            <Column>
              <Small><FindIcon />Find</Small>
              <Small $split={10}><ReplaceIcon />Replace<Chevron /></Small>
              <Small><SelectIcon />Select<Chevron /></Small>
            </Column>
          </Group>

          <Group w={72} label="Voice"><Big $w={56}><DictateIcon /><Line>Dictate</Line><Chevron /></Big></Group>
          <Group w={77} label="Add-ins"><Big $w={56}><AddinsIcon /><Line>Add-ins</Line></Big></Group>
          <Group w={84}><Big $w={64}><DesignerIcon /><Line>Designer</Line></Big></Group>
          <Collapse aria-label="Collapse ribbon"><WideChevron /></Collapse>
        </RibbonRow>

        <QuickBar>
          <QuickCluster $gap={16}>
            <Switch>AutoSave<SwitchTrack><input type="checkbox" />Off</SwitchTrack></Switch>
            <Small><SaveIcon />Save</Small>
          </QuickCluster>
          <QuickCluster $off>
            <Small $off><UndoIcon />Undo</Small>
            <Chevron />
            <Small $off><RedoIcon />Redo</Small>
          </QuickCluster>
          <Small><PresentIcon />From Beginning</Small>
          <QuickCluster $gap={14}>
            <Small><NewSlideSmallIcon />New Slide</Small>
            <Chevron />
          </QuickCluster>
          <Small aria-label="Customize toolbar"><OverflowIcon /></Small>
        </QuickBar>
      </RibbonCard>

      <Workspace>
        <SlidePane>
          <SlideList>
            {THUMBS.map((Art, i) => (
              <SlideItem key={i} $on={i === 0}>
                {i + 1}
                <Thumb $on={i === 0} aria-label={`Slide ${i + 1}`}><Art /></Thumb>
              </SlideItem>
            ))}
          </SlideList>
          <ScrollTrack $w={20}>
            <ScrollButton aria-label="Scroll up"><Arrow /></ScrollButton>
            <ScrollBody><ScrollThumb $size={61} /></ScrollBody>
            <ScrollButton aria-label="Scroll down"><Arrow down /></ScrollButton>
          </ScrollTrack>
        </SlidePane>
        <Stage>
          <Slide>
            <Svg viewBox="0 0 1230 692"><Columns /></Svg>
            <SlideText>
              <h1>Sum(previous_ctc)</h1>
              <p>By team</p>
            </SlideText>
          </Slide>
        </Stage>
        <NavStack>
          <ScrollTrack $w={18}>
            <ScrollButton aria-label="Scroll up"><Arrow /></ScrollButton>
            <ScrollBody><ScrollThumb $size={12} /></ScrollBody>
            <ScrollButton aria-label="Scroll down"><Arrow down /></ScrollButton>
          </ScrollTrack>
          <ScrollButton aria-label="Previous slide"><Arrow twice /></ScrollButton>
          <ScrollButton aria-label="Next slide"><Arrow down twice /></ScrollButton>
        </NavStack>
      </Workspace>

      <StatusBar>
        <StatusSide>
          <StatusItem $start={10} $end={20}>Slide 1 of 8</StatusItem>
          <StatusItem $start={20} $end={20}>English (India)</StatusItem>
          <StatusItem $strong><AccessibilityIcon />Accessibility: Investigate</StatusItem>
        </StatusSide>
        <StatusSide>
          <StatusItem $end={24}><NotesIcon />Notes</StatusItem>
          <ViewButton $on aria-label="Normal"><NormalViewIcon /></ViewButton>
          <ViewButton aria-label="Slide sorter"><SorterIcon /></ViewButton>
          <ViewButton aria-label="Reading view"><ReadingIcon /></ViewButton>
          <ViewButton aria-label="Slide show"><ShowIcon /></ViewButton>
          <ZoomButton aria-label="Zoom out"><Icon s={10}><path d="M0 5h10" strokeWidth="1.2" /></Icon></ZoomButton>
          <ZoomRange type="range" min={10} max={200} defaultValue={105} aria-label="Zoom" />
          <ZoomButton aria-label="Zoom in"><Icon s={10}><path d="M0 5h10M5 0v10" strokeWidth="1.2" /></Icon></ZoomButton>
          <StatusItem $start={10} $end={10}>103%</StatusItem>
          <ViewButton $w={28} aria-label="Fit slide to window"><FitIcon /></ViewButton>
        </StatusSide>
      </StatusBar>

      <Pointer>
        <Icon s={12} h={20}><path d="M.5 0v15.5l3.5-3.3 2.7 6 2.6-1.2-2.7-5.7H11z" fill="#fff" stroke="#222" /></Icon>
      </Pointer>
    </Shell>
  );
}
